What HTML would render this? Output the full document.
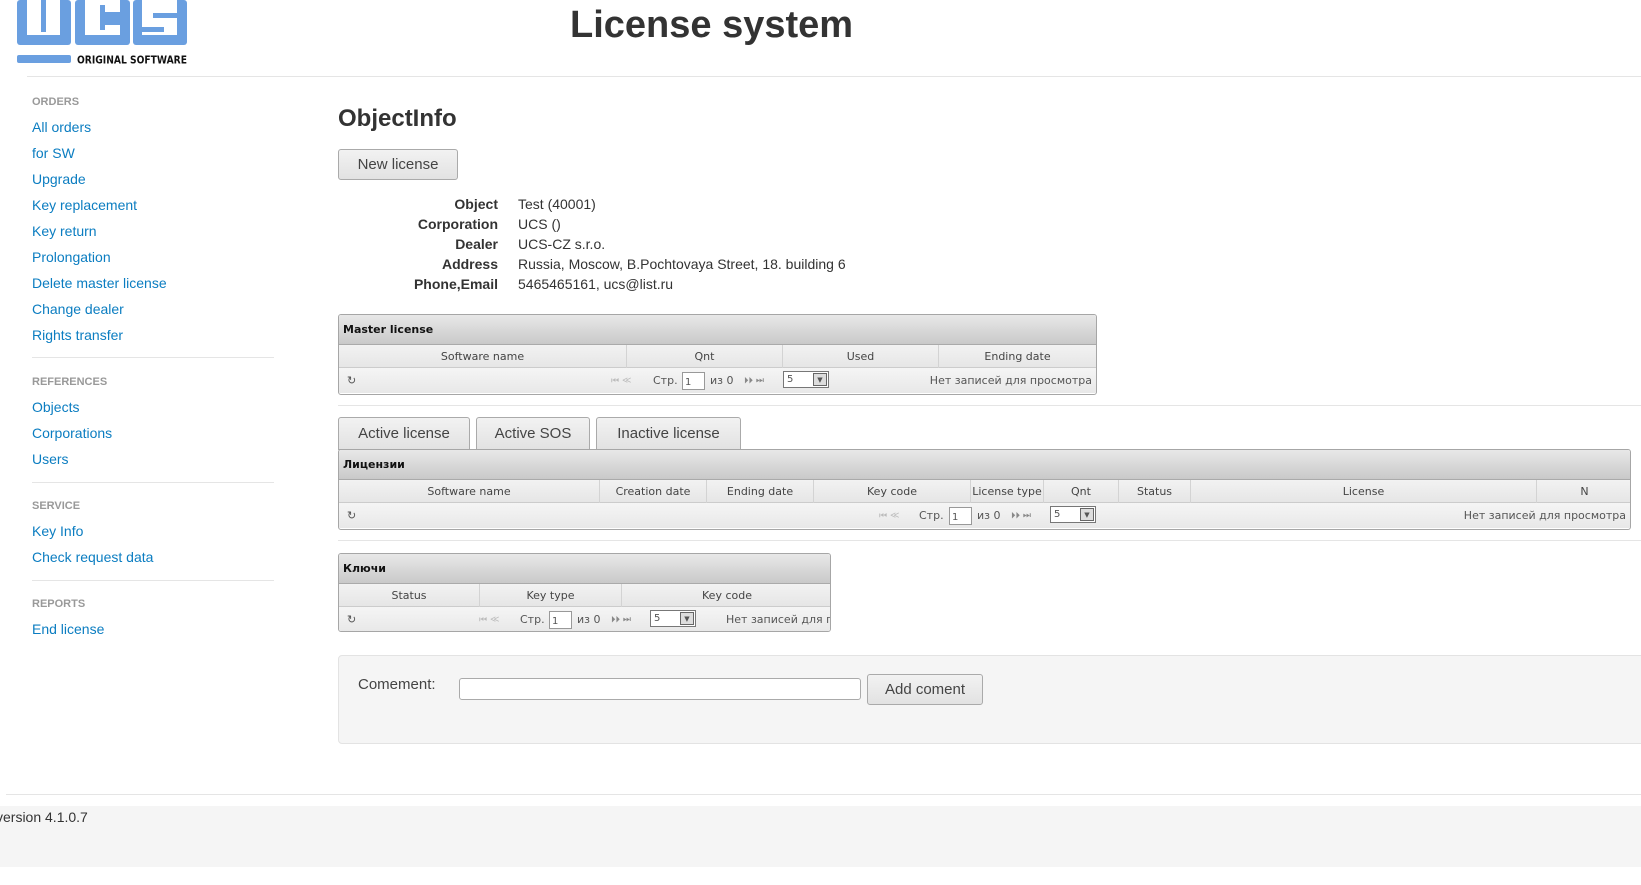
<!DOCTYPE html>
<html><head><meta charset="utf-8"><style>
*{box-sizing:border-box;margin:0;padding:0}
body{width:1641px;height:885px;position:relative;background:#fff;font-family:"Liberation Sans",Arial,sans-serif;color:#333;overflow:hidden}
.a{position:absolute}
.nav{position:absolute;left:32px;font-size:14px;color:#0b7dc1}
.sec{position:absolute;left:32px;font-size:11px;color:#999;font-weight:bold}
.hr{position:absolute;height:1px;background:#e5e5e5}
.btn{position:absolute;border:1px solid #aaa;border-radius:3px;background:linear-gradient(#f2f2f2,#e2e2e2);font-size:15px;color:#444;text-align:center}
.lab{position:absolute;width:200px;left:298px;text-align:right;font-weight:bold;font-size:14px;color:#333}
.val{position:absolute;left:518px;font-size:14px;color:#333}
.grid{position:absolute;border:1px solid #a6a6a6;border-radius:3px;overflow:hidden;font-family:"DejaVu Sans",sans-serif;font-size:11px;color:#333;background:#fff}
.gh{height:30px;background:linear-gradient(#e8e8e8,#c9c9c9);border-bottom:1px solid #aaa;font-weight:bold;padding:8px 4px;font-size:11px;color:#111}
.gc{height:23px;position:relative;background:linear-gradient(#f2f2f2,#e6e6e6);border-bottom:1px solid #ccc}
.gc span{position:absolute;top:0;height:23px;line-height:23px;text-align:center;border-right:1px solid #d3d3d3;color:#444;overflow:hidden;white-space:nowrap}
.gp{height:25px;position:relative;background:linear-gradient(#f5f5f5,#e8e8e8);color:#555}
.gp i{position:absolute;font-style:normal;top:6px}
.inp{position:absolute;top:4px;width:23px;height:18px;border:1px solid #999;background:#fff;font-size:10px;padding:4px 2px 0}
.sel{position:absolute;top:3px;width:46px;height:17px;border:1px solid #777;background:#fff;font-size:10px;padding:2px 3px}
.sel b{position:absolute;right:1px;top:1px;width:14px;height:13px;border:1px solid #666;background:#ddd;font-size:7px;text-align:center;line-height:13px}
</style></head><body>
<!-- logo -->
<svg class="a" style="left:17px;top:0" width="172" height="66" viewBox="0 0 172 66">
<g fill="#6a9fe0">
<rect x="0" y="0" width="54" height="45" rx="3"/>
<rect x="58" y="0" width="55" height="45" rx="3"/>
<rect x="116" y="0" width="54" height="45" rx="3"/>
<rect x="0" y="55" width="54" height="8" rx="2"/>
</g>
<g fill="#fff">
<path d="M10 0H24V32H29V0H43V35H10Z"/>
<path d="M68 0H103V12H88V25H103V35H68Z"/>
<path d="M125 0H160V13H136V18H160V35H125V27H147V32H147V27H125Z"/>
</g>
<g fill="#6a9fe0">
<rect x="83" y="5" width="5" height="25"/>
<rect x="136" y="13" width="24" height="5"/>
<rect x="125" y="27" width="22" height="5"/>
</g>
<text x="60" y="63.5" font-family="DejaVu Sans Condensed, DejaVu Sans" font-weight="bold" font-size="11" fill="#111" textLength="110" lengthAdjust="spacingAndGlyphs">ORIGINAL SOFTWARE</text>
</svg>
<div class="a" style="left:570px;top:4px;font-size:38px;font-weight:bold;color:#333">License system</div>
<div class="hr" style="left:27px;right:0;top:76px"></div>

<div class="sec" style="top:96px">ORDERS</div>
<div class="nav" style="top:119px">All orders</div>
<div class="nav" style="top:145px">for SW</div>
<div class="nav" style="top:171px">Upgrade</div>
<div class="nav" style="top:197px">Key replacement</div>
<div class="nav" style="top:223px">Key return</div>
<div class="nav" style="top:249px">Prolongation</div>
<div class="nav" style="top:275px">Delete master license</div>
<div class="nav" style="top:301px">Change dealer</div>
<div class="nav" style="top:327px">Rights transfer</div>
<div class="hr" style="left:32px;width:242px;top:357px"></div>
<div class="sec" style="top:376px">REFERENCES</div>
<div class="nav" style="top:399px">Objects</div>
<div class="nav" style="top:425px">Corporations</div>
<div class="nav" style="top:451px">Users</div>
<div class="hr" style="left:32px;width:242px;top:482px"></div>
<div class="sec" style="top:500px">SERVICE</div>
<div class="nav" style="top:523px">Key Info</div>
<div class="nav" style="top:549px">Check request data</div>
<div class="hr" style="left:32px;width:242px;top:580px"></div>
<div class="sec" style="top:598px">REPORTS</div>
<div class="nav" style="top:621px">End license</div>

<div class="a" style="left:338px;top:105px;font-size:24px;font-weight:bold;color:#333">ObjectInfo</div>
<div class="btn" style="left:338px;top:149px;width:120px;height:31px;line-height:29px">New license</div>

<div class="lab" style="top:196px">Object</div><div class="val" style="top:196px">Test (40001)</div>
<div class="lab" style="top:216px">Corporation</div><div class="val" style="top:216px">UCS ()</div>
<div class="lab" style="top:236px">Dealer</div><div class="val" style="top:236px">UCS-CZ s.r.o.</div>
<div class="lab" style="top:256px">Address</div><div class="val" style="top:256px">Russia, Moscow, B.Pochtovaya Street, 18. building 6</div>
<div class="lab" style="top:276px">Phone,Email</div><div class="val" style="top:276px">5465465161, ucs@list.ru</div>

<!-- master -->
<div class="grid" style="left:338px;top:314px;width:759px;height:81px">
<div class="gh">Master license</div>
<div class="gc"><span style="left:0;width:288px">Software name</span><span style="left:288px;width:156px">Qnt</span><span style="left:444px;width:156px">Used</span><span style="left:600px;width:158px">Ending date</span></div>
<div class="gp"><i style="left:8px">↻</i><i style="left:272px;color:#bbb;font-size:9px;top:8px">⏮ ≪</i><i style="left:314px">Стр.</i><div class="inp" style="left:343px">1</div><i style="left:371px">из 0</i><i style="left:405px;color:#888;font-size:9px;top:8px">⏵⏵ ⏭</i><div class="sel" style="left:444px">5<b>▼</b></div><i style="right:4px">Нет записей для просмотра</i></div>
</div>
<div class="hr" style="left:338px;right:0;top:405px"></div>

<div class="btn" style="left:338px;top:417px;width:132px;height:33px;line-height:31px;border-radius:3px 3px 0 0">Active license</div>
<div class="btn" style="left:476px;top:417px;width:114px;height:33px;line-height:31px;border-radius:3px 3px 0 0">Active SOS</div>
<div class="btn" style="left:596px;top:417px;width:145px;height:33px;line-height:31px;border-radius:3px 3px 0 0">Inactive license</div>

<div class="grid" style="left:338px;top:449px;width:1293px;height:81px">
<div class="gh">Лицензии</div>
<div class="gc"><span style="left:0;width:261px">Software name</span><span style="left:261px;width:107px">Creation date</span><span style="left:368px;width:107px">Ending date</span><span style="left:475px;width:157px">Key code</span><span style="left:632px;width:73px">License type</span><span style="left:705px;width:75px">Qnt</span><span style="left:780px;width:72px">Status</span><span style="left:852px;width:346px">License</span><span style="left:1198px;width:95px;border:0">N</span></div>
<div class="gp"><i style="left:8px">↻</i><i style="left:540px;color:#bbb;font-size:9px;top:8px">⏮ ≪</i><i style="left:580px">Стр.</i><div class="inp" style="left:610px">1</div><i style="left:638px">из 0</i><i style="left:672px;color:#888;font-size:9px;top:8px">⏵⏵ ⏭</i><div class="sel" style="left:711px">5<b>▼</b></div><i style="right:4px">Нет записей для просмотра</i></div>
</div>
<div class="hr" style="left:338px;right:0;top:540px"></div>

<div class="grid" style="left:338px;top:553px;width:493px;height:79px">
<div class="gh">Ключи</div>
<div class="gc"><span style="left:0;width:141px">Status</span><span style="left:141px;width:142px">Key type</span><span style="left:283px;width:210px;border:0">Key code</span></div>
<div class="gp"><i style="left:8px">↻</i><i style="left:140px;color:#bbb;font-size:9px;top:8px">⏮ ≪</i><i style="left:181px">Стр.</i><div class="inp" style="left:210px">1</div><i style="left:238px">из 0</i><i style="left:272px;color:#888;font-size:9px;top:8px">⏵⏵ ⏭</i><div class="sel" style="left:311px">5<b>▼</b></div><i style="left:387px;white-space:nowrap">Нет записей для просмотра</i></div>
</div>

<div class="a" style="left:338px;top:655px;width:1310px;height:89px;background:#f5f5f5;border:1px solid #e3e3e3;border-radius:4px"></div>
<div class="a" style="left:358px;top:676px;font-size:15px;color:#444">Comement:</div>
<div class="a" style="left:459px;top:678px;width:402px;height:22px;border:1px solid #aaa;border-radius:3px;background:#fff"></div>
<div class="btn" style="left:867px;top:674px;width:116px;height:31px;line-height:29px">Add coment</div>

<div class="hr" style="left:6px;right:0;top:794px"></div>
<div class="a" style="left:0;top:806px;width:1641px;height:61px;background:#f5f5f5"></div>
<div class="a" style="left:-4px;top:809px;font-size:14px;color:#333">version 4.1.0.7</div>
</body></html>
